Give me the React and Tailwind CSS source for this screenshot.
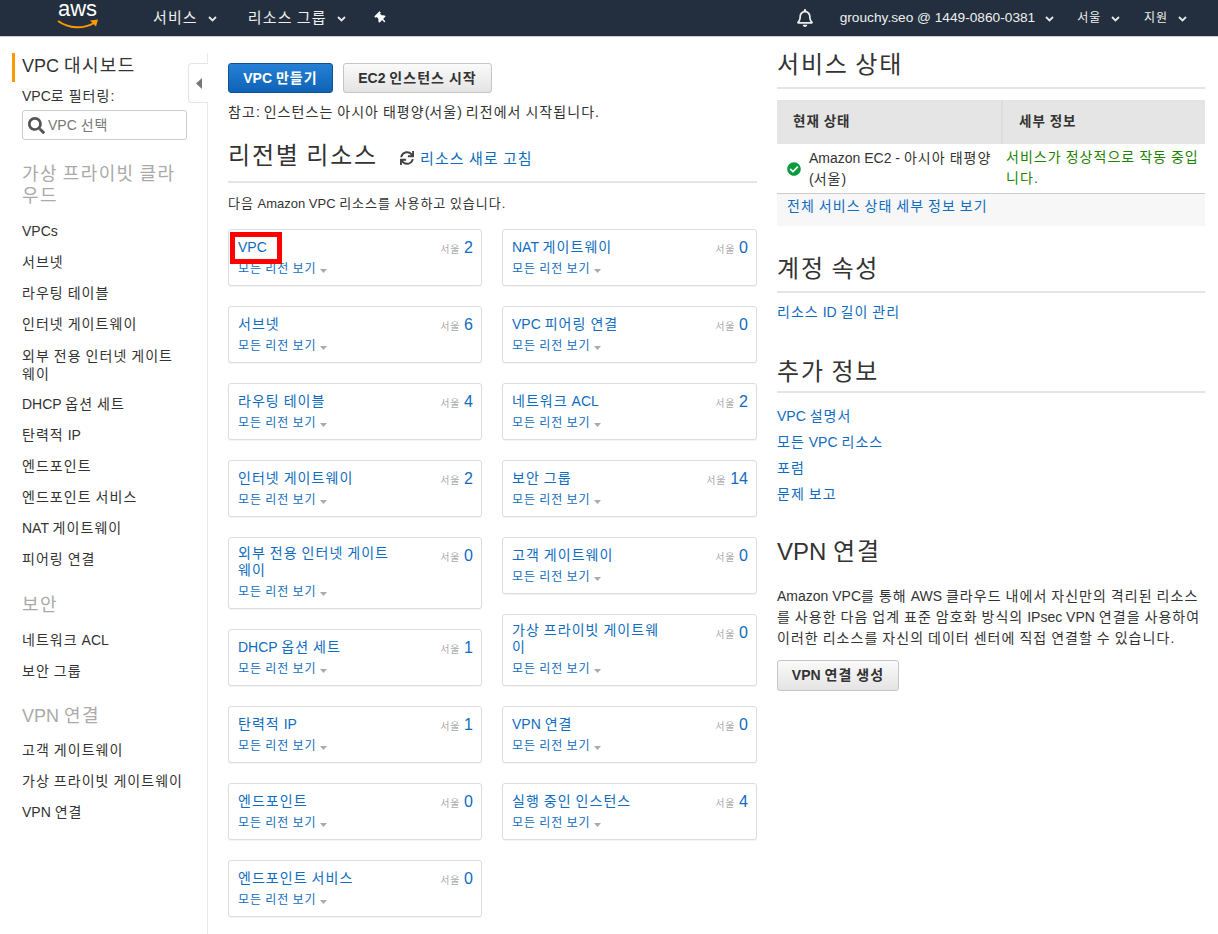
import React from "react";
import { FaRegBell, FaSearch, FaSync, FaThumbtack, FaCheckCircle } from "react-icons/fa";

const FONT = { fontFamily: '"Liberation Sans","Noto Sans CJK KR",sans-serif' };
// Hangul in the reference has wider advances than Noto: widen Hangul runs only, keep Latin as is.
const K = ({ children }) => (
  <span>
    {String(children).split(/([가-힣]+)/).map((p, i) =>
      i % 2 ? <span key={i} className="tracking-[0.075em]">{p}</span> : p
    )}
  </span>
);
const Chev = () => (
  <svg width="9" height="6" viewBox="0 0 9 6" className="ml-[10px] mt-[2px]"><path d="M1 1l3.5 3.5L8 1" fill="none" stroke="#e5e7eb" strokeWidth="1.8" /></svg>
);
const Down = () => (
  <svg width="7" height="4" viewBox="0 0 7 4" className="ml-[4px] mt-[3px]"><path d="M0 0h7L3.500 4z" fill="#aaaaaa" /></svg>
);

function Card({ name, n, marked, wrap }) {
  return (
    <div className="relative w-full rounded-[3px] border border-[#dddddd] bg-white pb-[8px] pl-[9px] pr-[8px] pt-[10px] shadow-[0_1px_1px_rgba(0,0,0,0.05)]">
      <div className="flex justify-between">
        <a className={wrap ? "-mb-[1px] -mt-[3px] block w-[160px] text-[14px] leading-[17px] text-[#0f6cc0]" : "block h-[15px] w-[160px] text-[14px] leading-[15px] text-[#0f6cc0]"}><K>{name}</K></a>
        <div className="flex h-[15px] items-baseline text-[#0f6cc0]">
          <span className="mr-[4px] text-[10px] text-[#aaaaaa]"><K>서울</K></span>
          <span className="text-[16px] leading-[15px]">{n}</span>
        </div>
      </div>
      <div className="mt-[7px] flex h-[15px] items-center text-[12px] leading-[15px] text-[#0f6cc0]"><K>모든 리전 보기</K><Down /></div>
      {marked && <div className="absolute left-[1px] top-[2px] h-[32px] w-[52px] border-[5px] border-[#ff0000]" />}
    </div>
  );
}

const left = [["VPC", 2, true], ["서브넷", 6], ["라우팅 테이블", 4], ["인터넷 게이트웨이", 2], ["외부 전용 인터넷 게이트웨이", 0, false, true], ["DHCP 옵션 세트", 1], ["탄력적 IP", 1], ["엔드포인트", 0], ["엔드포인트 서비스", 0]];
const right = [["NAT 게이트웨이", 0], ["VPC 피어링 연결", 0], ["네트워크 ACL", 2], ["보안 그룹", 14], ["고객 게이트웨이", 0], ["가상 프라이빗 게이트웨이", 0, false, true], ["VPN 연결", 0], ["실행 중인 인스턴스", 4]];

const NavItem = ({ children }) => <a className="block h-[17px] text-[#333333]"><K>{children}</K></a>;

function Sidebar() {
  return (
    <aside className="relative mt-[16px] w-[208px] shrink-0 border-r border-[#eaeaea] pb-[12px] text-[14px] text-[#333333]">
      <div className="ml-[12px] border-l-[3px] border-[#f90] pb-[3px] pl-[7px] text-[18px] leading-[26px]"><K>VPC 대시보드</K></div>
      <div className="mt-[6px] pl-[22px] text-[14px] leading-[17px]"><K>VPC로 필터링:</K></div>
      <div className="ml-[22px] mt-[5px] flex h-[30px] w-[165px] items-center rounded-[3px] border border-[#cccccc] pl-[5px] text-[#777777]">
        <FaSearch className="mr-[3px] h-[17px] w-[17px] text-[#555555]" /><K>VPC 선택</K>
      </div>
      <div className="ml-[22px] mr-[20px] mt-[23px] text-[18px] leading-[22px] text-[#aaaaaa]"><K>가상 프라이빗 클라우드</K></div>
      <div className="ml-[22px] mr-[28px] mt-[16px] flex flex-col gap-[14px] leading-[17px]">
        <NavItem>VPCs</NavItem><NavItem>서브넷</NavItem><NavItem>라우팅 테이블</NavItem><NavItem>인터넷 게이트웨이</NavItem>
        <a className="block h-[35px] leading-[18px] text-[#333333]"><K>외부 전용 인터넷 게이트웨이</K></a>
        <NavItem>DHCP 옵션 세트</NavItem><NavItem>탄력적 IP</NavItem><NavItem>엔드포인트</NavItem><NavItem>엔드포인트 서비스</NavItem><NavItem>NAT 게이트웨이</NavItem><NavItem>피어링 연결</NavItem>
      </div>
      <div className="ml-[22px] mt-[26px] h-[22px] text-[18px] leading-[22px] text-[#aaaaaa]"><K>보안</K></div>
      <div className="ml-[22px] mt-[16px] flex flex-col gap-[14px] leading-[17px]"><NavItem>네트워크 ACL</NavItem><NavItem>보안 그룹</NavItem></div>
      <div className="ml-[22px] mt-[25px] h-[22px] text-[18px] leading-[22px] text-[#aaaaaa]"><K>VPN 연결</K></div>
      <div className="ml-[22px] mt-[15px] flex flex-col gap-[14px] leading-[17px]"><NavItem>고객 게이트웨이</NavItem><NavItem>가상 프라이빗 게이트웨이</NavItem><NavItem>VPN 연결</NavItem></div>
      <div className="absolute right-[-1px] top-[10px] flex h-[40px] w-[20px] items-center justify-center rounded-l-[4px] border border-r-0 border-[#e5e5e5] bg-white">
        <svg width="6" height="11" viewBox="0 0 6 11"><path d="M6 0v11L0 5.500z" fill="#777777" /></svg>
      </div>
    </aside>
  );
}

export default function App() {
  return (
    <div style={FONT} className="min-h-[934px] bg-white">
      <header className="flex h-[37px] items-center border-b border-[#cccccc] bg-[#232f3e] text-[13px] text-[#eeeeee]">
        <div className="relative ml-[57px] h-[36px] w-[42px]">
          <span className="absolute left-[1px] top-0 text-[22px] leading-[18px] text-white">aws</span>
          <svg className="absolute left-0 top-[18px]" width="42" height="11" viewBox="0 0 42 11"><path d="M1 3c11 8 26 8 36 2" fill="none" stroke="#f90" strokeWidth="2" /><path d="M33 2.500l8-1-2 7z" fill="#f90" /></svg>
        </div>
        <span className="ml-[54px] text-[15px]"><K>서비스</K></span><Chev />
        <span className="ml-[31px] text-[15px]"><K>리소스 그룹</K></span><Chev />
        <FaThumbtack className="ml-[29px] h-[12px] w-[12px] -rotate-45 text-white" />
        <FaRegBell className="ml-auto mr-[27px] h-[18px] w-[16px]" />
        <span className="text-[13.700px]">grouchy.seo @ 1449-0860-0381</span><Chev />
        <span className="ml-[23px] text-[12px]"><K>서울</K></span><Chev />
        <span className="ml-[24px] text-[12px]"><K>지원</K></span><Chev />
        <div className="w-[31px]" />
      </header>
      <div className="flex min-h-[897px]">
        <Sidebar />
        <main className="ml-[20px] w-[529px] shrink-0 pt-[26px]">
          <div className="flex gap-[10px]">
            <button className="h-[30px] w-[105px] rounded-[3px] border border-[#13508f] bg-gradient-to-b from-[#2580d5] to-[#0e63b5] text-[14px] font-bold text-white"><K>VPC 만들기</K></button>
            <button className="h-[30px] w-[149px] rounded-[3px] border border-[#c5c5c5] bg-gradient-to-b from-[#fafafa] to-[#e4e4e4] text-[14px] font-bold text-[#333333]"><K>EC2 인스턴스 시작</K></button>
          </div>
          <p className="mt-[11px] text-[14px] leading-[17px] text-[#333333]"><K>참고: 인스턴스는 아시아 태평양(서울) 리전에서 시작됩니다.</K></p>
          <div className="mt-[18px] flex items-end border-b-2 border-[#e5e5e5] pb-[9px]">
            <h2 className="text-[24px] leading-[33px] text-[#333333]"><K>리전별 리소스</K></h2>
            <FaSync className="mb-[7px] ml-[22px] h-[14px] w-[14px] text-[#444444]" />
            <a className="mb-[4px] ml-[6px] text-[15px] leading-[19px] text-[#0f6cc0]"><K>리소스 새로 고침</K></a>
          </div>
          <p className="mt-[12px] text-[13px] leading-[17px] text-[#333333]"><K>다음 Amazon VPC 리소스를 사용하고 있습니다.</K></p>
          <div className="mt-[17px] flex gap-[20px]">
            <div className="flex w-[254px] flex-col gap-[20px]">{left.map(([a, b, c, d]) => <Card key={a} name={a} n={b} marked={c} wrap={d} />)}</div>
            <div className="flex w-[255px] flex-col gap-[20px]">{right.map(([a, b, c, d]) => <Card key={a} name={a} n={b} marked={c} wrap={d} />)}</div>
          </div>
        </main>
        <section className="ml-[20px] w-[428px] shrink-0 pt-[11px] text-[14px] text-[#333333]">
          <h2 className="border-b-2 border-[#e5e5e5] pb-[6px] text-[24px] leading-[33px]"><K>서비스 상태</K></h2>
          <div className="mt-[11px] flex h-[44px] bg-[#e5e5e5] text-[13.500px] font-bold">
            <div className="flex w-[226px] items-center border-r-2 border-[#dddddd] pl-[16px]"><K>현재 상태</K></div>
            <div className="flex flex-1 items-center pl-[16px]"><K>세부 정보</K></div>
          </div>
          <div className="flex h-[50px] border-b border-[#cccccc] pt-[3px] leading-[21px]">
            <div className="flex w-[229px] items-center pb-[2px] pl-[10px]">
              <FaCheckCircle className="mr-[8px] h-[14px] w-[14px] shrink-0 text-[#0a9b3c]" />
              <K>Amazon EC2 - 아시아 태평양 (서울)</K>
            </div>
            <div className="flex-1 text-[#1d8102]"><K>서비스가 정상적으로 작동 중입니다.</K></div>
          </div>
          <div className="h-[32px] bg-[#f7f7f7] pl-[10px] pt-[3px] leading-[19px] text-[#0f6cc0]"><K>전체 서비스 상태 세부 정보 보기</K></div>
          <h2 className="mt-[26px] border-b-2 border-[#e5e5e5] pb-[6px] text-[24px] leading-[33px]"><K>계정 속성</K></h2>
          <a className="mt-[11px] block leading-[17px] text-[#0f6cc0]"><K>리소스 ID 길이 관리</K></a>
          <h2 className="mt-[34px] border-b-2 border-[#e5e5e5] pb-[3px] text-[24px] leading-[33px]"><K>추가 정보</K></h2>
          <div className="mt-[15px] flex flex-col gap-[9px] leading-[17px] text-[#0f6cc0]"><a><K>VPC 설명서</K></a><a><K>모든 VPC 리소스</K></a><a><K>포럼</K></a><a><K>문제 보고</K></a></div>
          <h2 className="mt-[32px] text-[24px] leading-[33px]"><K>VPN 연결</K></h2>
          <p className="mt-[18px] leading-[21px]"><K>Amazon VPC를 통해 AWS 클라우드 내에서 자신만의 격리된 리소스를 사용한 다음 업계 표준 암호화 방식의 IPsec VPN 연결을 사용하여 이러한 리소스를 자신의 데이터 센터에 직접 연결할 수 있습니다.</K></p>
          <button className="mt-[11px] h-[31px] w-[122px] rounded-[3px] border border-[#c5c5c5] bg-gradient-to-b from-[#fafafa] to-[#e4e4e4] text-[14px] font-bold"><K>VPN 연결 생성</K></button>
        </section>
      </div>
    </div>
  );
}
